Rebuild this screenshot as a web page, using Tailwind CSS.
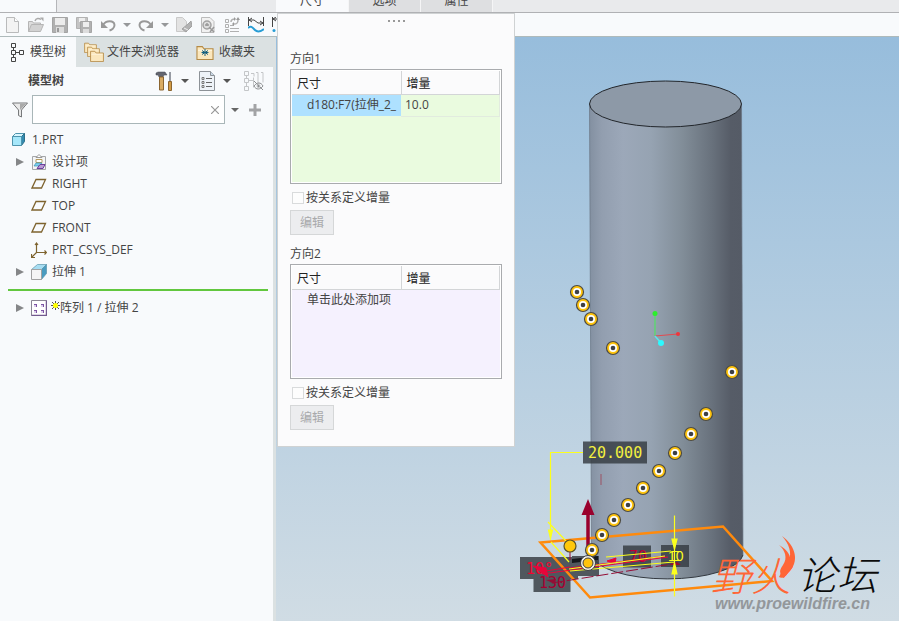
<!DOCTYPE html>
<html lang="zh-CN">
<head>
  <meta charset="UTF-8" />
  <meta name="viewport" content="width=device-width, initial-scale=1.0" />
  <title>1.PRT</title>
  <script src="https://cdn.jsdelivr.net/npm/@tailwindcss/browser@4"></script>
</head>
<body class="relative flex h-screen flex-col overflow-hidden bg-[#f8fafc] font-['Open_Sans','Noto_Sans_CJK_SC',sans-serif] text-xs text-[#444]">
  <!-- Shared drawing parts -->
  <svg class="absolute h-0 w-0" aria-hidden="true">
    <defs>
      <symbol id="caret" viewBox="0 0 8 4"><path d="M0 0h8L4 4z" fill="currentColor" /></symbol>
      <symbol id="expand" viewBox="0 0 8 10"><path d="M0 1l8 4-8 4z" fill="#858688" /></symbol>
      <symbol id="plane" viewBox="0 0 16 16"><path d="M5 3.500h9.500l-4 8.500h-9.500z" fill="none" stroke="#7e632e" stroke-width="1.300" /></symbol>
      <symbol id="folder" viewBox="0 0 16 14">
        <path d="M.5 13.500V1.500h5l1.500 2h8.500v10z" fill="#fbe7bd" stroke="#b58a45" />
        <path d="M1.500 5h13" stroke="#fff6df" />
      </symbol>
      <symbol id="marker" viewBox="0 0 16 16">
        <circle cx="8" cy="8" r="6.500" fill="#ffc40c" stroke="#4b4a45" stroke-width="1.200" />
        <circle cx="8" cy="8" r="4" fill="#fff" />
        <circle cx="8" cy="8" r="2.300" fill="#3d3f43" />
      </symbol>
    </defs>
  </svg>

  <!-- Dashboard tabs -->
  <nav class="flex h-[13px] shrink-0 items-end overflow-hidden border-b border-[#b0b1b4] bg-[#e9eaec]">
    <div class="h-full w-[57px] border-r border-[#b5b6b9] bg-[#f8fafc]"></div>
    <div class="w-[219px]"></div>
    <button class="w-[73px] border-r border-[#f5f5f6] bg-[#f9fafc] pb-[3px] leading-4">尺寸</button>
    <button class="w-[72px] border-r border-[#f5f5f6] bg-[#dedfe1] pb-[3px] leading-4">选项</button>
    <button class="w-[72px] border-r border-[#f5f5f6] bg-[#dedfe1] pb-[3px] leading-4">属性</button>
  </nav>

  <!-- Quick access toolbar -->
  <div class="flex h-6 shrink-0 items-center overflow-hidden border-b border-[#aebabb] text-[#96989a]">
    <button aria-label="新建" class="flex w-6 shrink-0 justify-center">
      <svg class="h-4 w-4" viewBox="0 0 16 16"><path d="M2.500.500h8l4 4v11h-12z" fill="#f3f3f3" stroke="#b9babb" /><path d="M10.500.500v4h4" fill="#fff" stroke="#b9babb" /></svg>
    </button>
    <button aria-label="打开" class="flex w-6 shrink-0 justify-center">
      <svg class="h-4 w-4" viewBox="0 0 16 16"><path d="M.5 14.500v-10h4l1 1.500h7v2" fill="#ddd" stroke="#b5b5b5" /><path d="M.5 14.500l3-7h12l-3 7z" fill="#d2d2d2" stroke="#b5b5b5" /><path d="M7 4c1-3 4-3 6-1.500" fill="none" stroke="#aaa" stroke-width="1.500" /><path d="M12 .5h3.500v4z" fill="#aaa" /></svg>
    </button>
    <button aria-label="保存" class="flex w-6 shrink-0 justify-center">
      <svg class="h-4 w-4" viewBox="0 0 16 16"><path d="M.5.500h15v15h-15z" fill="#b0b0b0" stroke="#a4a4a4" /><path d="M3 1h10v7h-10z" fill="#ececec" /><path d="M4 10h8v6h-8z" fill="#ddd" /><path d="M5 11h2v4h-2z" fill="#999" /></svg>
    </button>
    <button aria-label="保存副本" class="flex w-6 shrink-0 justify-center">
      <svg class="h-4 w-4" viewBox="0 0 16 16"><path d="M.5.500h11v11h-11z" fill="#c4c4c4" stroke="#b2b2b2" /><path d="M3 1h6v4h-6z" fill="#eee" /><path d="M4.500 4.500h11v11h-11z" fill="#b2b2b2" stroke="#a6a6a6" /><path d="M7 5h6v5h-6z" fill="#eee" /><path d="M7 12h6v4h-6z" fill="#ddd" /></svg>
    </button>
    <button aria-label="撤消" class="flex w-6 shrink-0 justify-center">
      <svg class="h-4 w-4" viewBox="0 0 16 16"><path d="M3 8c3-5 11-5 11.500 0 0 3-3 5-5 5.500" fill="none" stroke="#999" stroke-width="2" /><path d="M1 4v7h7z" fill="#999" /></svg>
    </button>
    <button aria-label="撤消列表" class="flex w-[14px] shrink-0 justify-center"><svg class="h-1 w-2"><use href="#caret" /></svg></button>
    <button aria-label="重做" class="flex w-6 shrink-0 justify-center">
      <svg class="h-4 w-4" viewBox="0 0 16 16"><path d="M13 8c-3-5-11-5-11.500 0 0 3 3 5 5 5.500" fill="none" stroke="#999" stroke-width="2" /><path d="M15 4v7h-7z" fill="#999" /></svg>
    </button>
    <button aria-label="重做列表" class="flex w-[14px] shrink-0 justify-center"><svg class="h-1 w-2"><use href="#caret" /></svg></button>
    <button aria-label="重新生成" class="flex w-6 shrink-0 justify-center">
      <svg class="h-4 w-4" viewBox="0 0 16 16"><path d="M.5.500h6l4 4v10h-10z" fill="#e3e3e3" stroke="#c9c9c9" /><path d="M15 4l1 5-6 6-4-3 6-5z" fill="#b2b2b2" stroke="#a2a2a2" /><path d="M8 11l4 2" stroke="#eee" /></svg>
    </button>
    <button aria-label="查找" class="flex w-6 shrink-0 justify-center">
      <svg class="h-4 w-4" viewBox="0 0 16 16"><path d="M1.500.500h8.500l4 4v11h-12.500z" fill="#f1f1f1" stroke="#bbb" /><circle cx="7" cy="8" r="4" fill="#ddd" stroke="#a2a2a2" stroke-width="1.500" /><path d="M5 8h4M7 6v3M9 10l5 5M14 10l-4 5" stroke="#999" stroke-width="1.500" /></svg>
    </button>
    <button aria-label="选项" class="flex w-6 shrink-0 justify-center">
      <svg class="h-4 w-4" viewBox="0 0 16 16" fill="none" stroke="#b0b0b0"><path d="M1.500 2.500h3v3h-3zM1.500 7.500h3v3h-3zM1.500 12.500h3v3h-3zM6 11.500h9M6 14.500h9M6 8.500h4" /><path d="M7 5c0-3 2-3 4-3M14 3c0 4-2 4-4 4" stroke-width="1.500" /><path d="M10 0v4l2-2zM12 3h4l-2-3zM10 5v4l-2-2z" fill="#999" stroke="none" /></svg>
    </button>
    <button aria-label="尺寸显示" class="flex w-6 shrink-0 justify-center">
      <svg class="h-4 w-4" viewBox="0 0 16 16" fill="none"><path d="M.5 0v9M15.500 0v9M1 3h5l4 3h5M1 3l3-2M1 3l3 2M15 6l-3-2M15 6l-3 2" stroke="#454545" /><path d="M0 11c3-3 5 0 7 2s5 2 9-1" stroke="#289dd5" stroke-width="2" /></svg>
    </button>
    <button aria-label="参考" class="flex w-6 shrink-0 justify-center">
      <svg class="h-4 w-4" viewBox="0 0 16 16" fill="none"><path d="M.5 0v10M1 2h8M1 2l3-2M1 2l3 2" stroke="#454545" /><circle cx="2" cy="13.500" r="1.500" fill="#289dd5" /></svg>
    </button>
  </div>

  <main class="flex min-h-0 flex-1">
    <!-- Navigator -->
    <aside class="w-[276px] shrink-0 border-r-[3px] border-[#dbe1e2] bg-[#f8fafc]">
      <div class="flex h-[30px] bg-[#dbe1e2]">
        <button class="flex w-[76px] items-center gap-1 bg-[#f8fafc] pl-[10px]">
          <svg class="h-5 w-4" viewBox="0 0 16 20" fill="none" stroke="#444"><path d="M1.500 1.500h4v4h-4zM1.500 8.500h4v4h-4zM1.500 15.500h4v4h-4zM9.500 8.500h4v4h-4zM3.500 5.500v3M3.500 12.500v3M5.500 10.500h4" /></svg>
          模型树
        </button>
        <button class="flex w-[112px] items-center gap-[3px] pl-2">
          <svg class="h-5 w-5" viewBox="0 0 20 20"><use href="#folder" x="0" y="0" width="13" height="11" /><use href="#folder" x="3" y="4" width="13" height="11" /><use href="#folder" x="6" y="8" width="14" height="12" /></svg>
          文件夹浏览器
        </button>
        <button class="flex flex-1 items-center gap-[5px] pl-2">
          <svg class="h-4 w-[18px]" viewBox="0 0 18 16"><use href="#folder" x="0" y="1" width="18" height="15" /><path d="M9 5v7M6 6.500l6 4M12 6.500l-6 4M5.500 8.500h7" stroke="#16607f" /></svg>
          收藏夹
        </button>
      </div>

      <div class="flex h-7 items-center pl-7">
        <h2 class="w-[127px] font-bold">模型树</h2>
        <button aria-label="设置" class="w-[18px]">
          <svg class="h-5 w-[18px]" viewBox="0 0 18 20"><path d="M1 2l2-1h7l2 3h-3l-1 2h-4l-1-2H1z" fill="#63656f" stroke="#444a55" stroke-width=".5" /><path d="M4.500 6h4v13h-4z" fill="#d9ab62" stroke="#8b6530" /><path d="M15 1v9" stroke="#777b86" stroke-width="1.500" /><path d="M13.500 10.500h3v9h-3z" fill="#d29b45" stroke="#8b6530" /></svg>
        </button>
        <button aria-label="设置列表" class="flex w-6 justify-center text-[#555]"><svg class="h-1 w-2"><use href="#caret" /></svg></button>
        <button aria-label="显示" class="flex w-5 justify-center">
          <svg class="h-5 w-4" viewBox="0 0 16 20"><path d="M.5.500h11l4 4v15H.5z" fill="#eef3f8" stroke="#8d9297" /><path d="M11.500.500v4h4" fill="#c9d8e6" stroke="#8d9297" /><path d="M7 7.500h6M7 11.500h6M7 15.500h6" stroke="#666" /><path d="M3 6.500h2v2H3zM3 10.500h2v2H3zM3 14.500h2v2H3z" fill="none" stroke="#777" /></svg>
        </button>
        <button aria-label="显示列表" class="flex w-5 justify-center text-[#555]"><svg class="h-1 w-2"><use href="#caret" /></svg></button>
        <button aria-label="隐藏列" class="ml-[7px]">
          <svg class="h-5 w-5" viewBox="0 0 20 20" fill="none" stroke="#c4c6c8"><path d="M.5.500h4v4h-4zM.5 7.500h4v4h-4zM.5 15.500h4v4h-4zM2.500 5v3M2.500 12v3M5 9.500h4M7 2.500h3v3M12 1.500h2v14M17 1.500h2v10M9.500 6.500v10" /><path d="M10 15c3-4 7-4 9 0-3 4-7 4-9 0M10 10l9 9" stroke="#8c8e90" /><circle cx="14.500" cy="15" r="1.500" fill="#8c8e90" /></svg>
        </button>
      </div>

      <div class="flex items-center pl-3">
        <svg class="mr-1 h-4 w-4" viewBox="0 0 16 16"><path d="M.5 1h15l-6 7v7l-3-1.500V8z" fill="#e9e9e9" stroke="#77797b" /><path d="M8 2h6L8 8z" fill="#aaa" /></svg>
        <div class="relative w-[193px]">
          <input type="text" aria-label="搜索" class="block h-[29px] w-full border border-[#a9b6b8] bg-white pr-5 pl-1 outline-none" />
          <button aria-label="清除" class="absolute top-0 right-1.5 h-full"><svg class="h-2 w-2" viewBox="0 0 8 8"><path d="M0 0l8 8M8 0L0 8" stroke="#999" stroke-width="1.200" /></svg></button>
        </div>
        <button aria-label="筛选" class="flex w-[19px] justify-center text-[#666]"><svg class="h-1 w-2"><use href="#caret" /></svg></button>
        <button aria-label="添加" class="ml-[5px]"><svg class="h-3 w-3" viewBox="0 0 12 12"><path d="M6 0v12M0 6h12" stroke="#a2a3a5" stroke-width="3" /></svg></button>
      </div>

      <!-- Model tree -->
      <ul class="mt-[5px] leading-[22px]">
        <li class="flex h-[22px] items-center gap-1 pl-3">
          <svg class="h-4 w-4" viewBox="0 0 16 16"><path d="M.5 4.500l3-3h9l-3 3z" fill="#d8f6ff" stroke="#4f94ad" /><path d="M9.500 4.500l3-3v8l-3 4z" fill="#348bb1" stroke="#2d6f88" /><path d="M.5 4.500h9v9h-9z" fill="#a6e7fa" stroke="#4f94ad" /></svg>
          1.PRT
        </li>
        <li class="flex h-[22px] items-center pl-4">
          <svg class="mr-[7px] h-[10px] w-2"><use href="#expand" /></svg>
          <svg class="mr-[5px] h-4 w-4" viewBox="0 0 16 16"><path d="M1.500 2.500h13v13h-13z" fill="#f4f5f6" stroke="#a4a6a9" /><path d="M5 3.500l3-3 3 3z" fill="#fff" stroke="#999" /><path d="M5 5.500h6v3H5z" fill="#fff" stroke="#b59b5e" /><path d="M3 12l2-3h6l-2 3z" fill="#7fd0ee" stroke="#3a92b5" stroke-width=".7" /><path d="M6 14.500l3-4h5l-2 4z" fill="#b89ad3" stroke="#6d3f9c" /></svg>
          设计项
        </li>
        <li class="flex h-[22px] items-center gap-[5px] pl-[31px]"><svg class="h-4 w-4"><use href="#plane" /></svg>RIGHT</li>
        <li class="flex h-[22px] items-center gap-[5px] pl-[31px]"><svg class="h-4 w-4"><use href="#plane" /></svg>TOP</li>
        <li class="flex h-[22px] items-center gap-[5px] pl-[31px]"><svg class="h-4 w-4"><use href="#plane" /></svg>FRONT</li>
        <li class="flex h-[22px] items-center gap-[5px] pl-[31px]">
          <svg class="h-4 w-4" viewBox="0 0 16 16" fill="none" stroke="#7e632e" stroke-width="1.200"><path d="M5.500 1v9.500h10M5.500 10.500l-4.500 4.500M4 3l1.500-2L7 3M13.500 8.500l2 2-2 2M.5 12v3.500h3.500" /></svg>
          PRT_CSYS_DEF
        </li>
        <li class="flex h-[22px] items-center pl-4">
          <svg class="mr-[7px] h-[10px] w-2"><use href="#expand" /></svg>
          <svg class="mr-[5px] h-4 w-4" viewBox="0 0 16 16"><path d="M.5 5.500l6-5h9l-5 5z" fill="#a7ddf2" stroke="#5c95ab" stroke-width=".7" /><path d="M10.500 5.500l5-5v9l-5 6z" fill="#4a9cc0" stroke="#5c95ab" stroke-width=".7" /><path d="M.5 5.500h10v10H.5z" fill="#f5f5f5" stroke="#a2a2a2" /></svg>
          拉伸 1
        </li>
        <li class="my-1.5 mr-[5px] ml-2 h-0.5 bg-[#62c73e]"></li>
        <li class="flex h-[22px] items-center pl-4">
          <svg class="mr-[7px] h-[10px] w-2"><use href="#expand" /></svg>
          <svg class="mr-1 h-4 w-4" viewBox="0 0 16 16"><path d="M.5.500h15v15H.5z" fill="#fff" stroke="#8b8795" /><path d="M15.500.500v15H.5" fill="none" stroke="#735a8f" stroke-width="1.500" /><path d="M3 4h3v3H3zM10 4h3v3h-3zM3 10h3v3H3zM10 10h3v3h-3z" fill="#7d55a5" /><path d="M3 5h2v2H3zM10 5h2v2h-2zM3 11h2v2H3zM10 11h2v2h-2z" fill="#ddd0eb" /></svg>
          <svg class="mb-1.5 h-[9px] w-[9px]" viewBox="0 0 9 9"><path d="M4.500 0v9M0 4.500h9M1 1l7 7M8 1L1 8" stroke="#555" /><circle cx="4.500" cy="4.500" r="2.500" fill="#ff0" /></svg>
          阵列 1 / 拉伸 2
        </li>
      </ul>
    </aside>

    <!-- Graphics area -->
    <section class="min-w-0 flex-1 bg-linear-to-b from-[#97bddc] to-[#d0dce4]">
      <svg class="h-full w-full" viewBox="276 37 623 584" preserveAspectRatio="xMinYMin slice">
        <defs>
          <linearGradient id="side">
            <stop offset="0" stop-color="#8390a1" />
            <stop offset=".08" stop-color="#929eaf" />
            <stop offset=".22" stop-color="#9ca8b9" />
            <stop offset=".4" stop-color="#96a3b2" />
            <stop offset=".6" stop-color="#828e99" />
            <stop offset=".8" stop-color="#68717c" />
            <stop offset=".92" stop-color="#565c67" />
            <stop offset="1" stop-color="#555b66" />
          </linearGradient>
        </defs>
        <path d="M589.500 104L591.500 555A76 26 0 0 0 743 555L741.500 104z" fill="url(#side)" />
        <path d="M591.500 555A76 26 0 0 0 743 555" fill="none" stroke="#333940" />
        <path d="M589.500 104L591.500 555M741.500 104L743 555" stroke="#687482" stroke-width=".7" />
        <ellipse cx="665.500" cy="104" rx="76" ry="23" fill="#8d99a7" stroke="#22262b" />

        <!-- Spin centre -->
        <g stroke-width="1.500">
          <path d="M655 336V314" stroke="#5fd573" />
          <path d="M655 336L678 334" stroke="#e4494e" stroke-width="1" />
          <path d="M655 336L661 343" stroke="#59e7ed" />
          <circle cx="655" cy="313.500" r="2.500" fill="#2cf02c" />
          <circle cx="678" cy="334" r="2" fill="#f0353b" />
          <circle cx="661" cy="343" r="3" fill="#2cfaff" />
        </g>
        <path d="M601 474v11" stroke="#9c5365" />

        <!-- Dimension labels -->
        <g fill="#353b41" fill-opacity=".82">
          <path d="M583 441.500h64v22h-64zM520 557h58v22h-58zM533.500 572h37v20h-37zM623 545.500h28v22h-28zM661 545h28v22h-28zM572 556h27v20h-27z" />
        </g>
        <path d="M572 559l26-3v4l-26 3z" fill="#15191d" />
        <g font-family="'DejaVu Sans Mono', monospace" font-size="15">
          <text x="588" y="458" fill="#f3f03f">20.000</text>
          <text x="526" y="574" fill="#f0062e">10°</text>
          <text x="539" y="588" fill="#a60030">130</text>
          <text x="629" y="562" fill="#c00034">70</text>
        </g>

        <!-- Sketch plane and direction arrow -->
        <path d="M540.500 542.500L723 526.500L772 581L590 597.500z" fill="none" stroke="#ff8a0c" stroke-width="2.500" />
        <path d="M588 550V512" stroke="#9a002d" stroke-width="3.500" />
        <path d="M588 499l6.500 16h-13z" fill="#9a002d" />

        <g fill="none" stroke="#e8053a">
          <path d="M546 571L570 567M542 574L668 557M570 568L665 556" />
          <path d="M570 548v14M552 583L678 563" stroke="#940e35" stroke-dasharray="12 3" />
          <path d="M533 566l13 2 2 9zM607 561l9-3-1 5z" fill="#e8053a" />
          <path d="M546 580l10-1-1 5zM668 565l9-3 4 3z" fill="#940e35" stroke="none" />
        </g>
        <g fill="none" stroke="#fcff1d" stroke-width="1.200">
          <path d="M583 452.500H550.500V540M548 522L566 541M551 542L569 562M674.500 515.500V596.500M606 557L671 551M569 569L665 556M570 571L674 562" />
          <path d="M550.500 538l-2-8h4zM674.500 549l-2.500-10h5zM674.500 563l-2.500 11h5zM672 551.500h9M672 560.500h9" fill="#fcff1d" />
        </g>
        <text x="668" y="561" font-family="'Liberation Sans', sans-serif" font-size="14" fill="#fcff1d">10</text>

        <!-- Pattern members -->
        <g>
          <use href="#marker" x="569" y="284" width="16" height="16" />
          <use href="#marker" x="575" y="297" width="16" height="16" />
          <use href="#marker" x="583" y="311" width="16" height="16" />
          <use href="#marker" x="605" y="340" width="16" height="16" />
          <use href="#marker" x="724" y="364" width="16" height="16" />
          <use href="#marker" x="698" y="406" width="16" height="16" />
          <use href="#marker" x="683" y="426" width="16" height="16" />
          <use href="#marker" x="667" y="445" width="16" height="16" />
          <use href="#marker" x="651" y="463" width="16" height="16" />
          <use href="#marker" x="635" y="480" width="16" height="16" />
          <use href="#marker" x="620" y="497" width="16" height="16" />
          <use href="#marker" x="606" y="512" width="16" height="16" />
          <use href="#marker" x="594" y="527" width="16" height="16" />
          <use href="#marker" x="584" y="542" width="16" height="16" />
          <circle cx="570" cy="546" r="6" fill="#ffc80a" stroke="#5a5325" stroke-width="1.200" />
          <circle cx="588" cy="563" r="7.500" fill="#f2f0e6" stroke="#3d3f43" />
          <circle cx="588" cy="563" r="5" fill="#ffc40c" stroke="#3d3f43" />
        </g>

        <!-- Forum mark -->
        <g font-family="'Noto Sans CJK SC', sans-serif" font-size="40" font-style="italic" font-weight="300">
          <text x="711" y="591" fill="#ff6637">野火</text>
          <text x="797" y="590" fill="#0b0b0b">论坛</text>
        </g>
        <path d="M782 536C796 546 800 562 788 573C785 577 782 579 779 577C783 571 777 574 783 565C788 558 785 550 779 545C788 550 792 557 789 561C792 552 789 544 782 536z" fill="#ff6637" />
        <text x="715" y="609" font-family="'Liberation Sans', sans-serif" font-size="16" font-style="italic" font-weight="bold" fill="#93979b">www.proewildfire.cn</text>
      </svg>
    </section>
  </main>

  <!-- Dimensions panel, drops down over the graphics area -->
  <form class="absolute top-[13px] left-[277px] w-[238px] border border-[#cfd2d3] bg-[#fbfbfc] px-3 pb-4 leading-4">
    <div class="flex h-[37px] justify-center gap-[3px] pt-1.5">
      <i class="h-0.5 w-0.5 bg-[#999]"></i><i class="h-0.5 w-0.5 bg-[#999]"></i><i class="h-0.5 w-0.5 bg-[#999]"></i><i class="h-0.5 w-0.5 bg-[#999]"></i>
    </div>

    <h3>方向1</h3>
    <div class="mt-0.5 h-[115px] border border-[#a9abae] bg-[#eafbdf] outline-1 -outline-offset-2 outline-white">
      <table class="w-full table-fixed border-collapse text-left">
        <thead class="bg-[#fbfbfc] text-[#222]">
          <tr class="h-6 border-b border-[#d3d5d7]">
            <th class="w-[110px] border-r border-[#d3d5d7] pt-1 pl-1.5 font-normal">尺寸</th>
            <th class="border-r-2 border-[#d3d5d7] pt-1 pl-[5px] font-normal">增量</th>
          </tr>
        </thead>
        <tbody>
          <tr class="h-[22px]">
            <td class="overflow-hidden bg-[#aee1ff] pl-4 whitespace-nowrap">d180:F7(拉伸_2_</td>
            <td class="border-r-2 border-b border-[#e2ebdf] pl-1">10.0</td>
          </tr>
        </tbody>
      </table>
    </div>
    <label class="mt-1.5 flex items-center gap-0.5 pl-0.5"><input type="checkbox" class="h-3 w-3 appearance-none border border-[#d9dbdc] bg-[#fdfdfd]" />按关系定义增量</label>
    <button type="button" disabled class="mt-1 block h-[25px] w-11 border border-[#d5d7d8] bg-[#ecedef] text-[#a8a9ab]">编辑</button>

    <h3 class="mt-[11px]">方向2</h3>
    <div class="mt-0.5 h-[115px] border border-[#a9abae] bg-[#f5f1fe] outline-1 -outline-offset-2 outline-white">
      <table class="w-full table-fixed border-collapse text-left">
        <thead class="bg-[#fbfbfc] text-[#222]">
          <tr class="h-6 border-b border-[#d3d5d7]">
            <th class="w-[110px] border-r border-[#d3d5d7] pt-1 pl-1.5 font-normal">尺寸</th>
            <th class="border-r-2 border-[#d3d5d7] pt-1 pl-[5px] font-normal">增量</th>
          </tr>
        </thead>
        <tbody>
          <tr class="h-[22px]">
            <td colspan="2" class="pl-4">单击此处添加项</td>
          </tr>
        </tbody>
      </table>
    </div>
    <label class="mt-1.5 flex items-center gap-0.5 pl-0.5"><input type="checkbox" class="h-3 w-3 appearance-none border border-[#d9dbdc] bg-[#fdfdfd]" />按关系定义增量</label>
    <button type="button" disabled class="mt-1 block h-[25px] w-11 border border-[#d5d7d8] bg-[#ecedef] text-[#a8a9ab]">编辑</button>
  </form>
</body>
</html>
